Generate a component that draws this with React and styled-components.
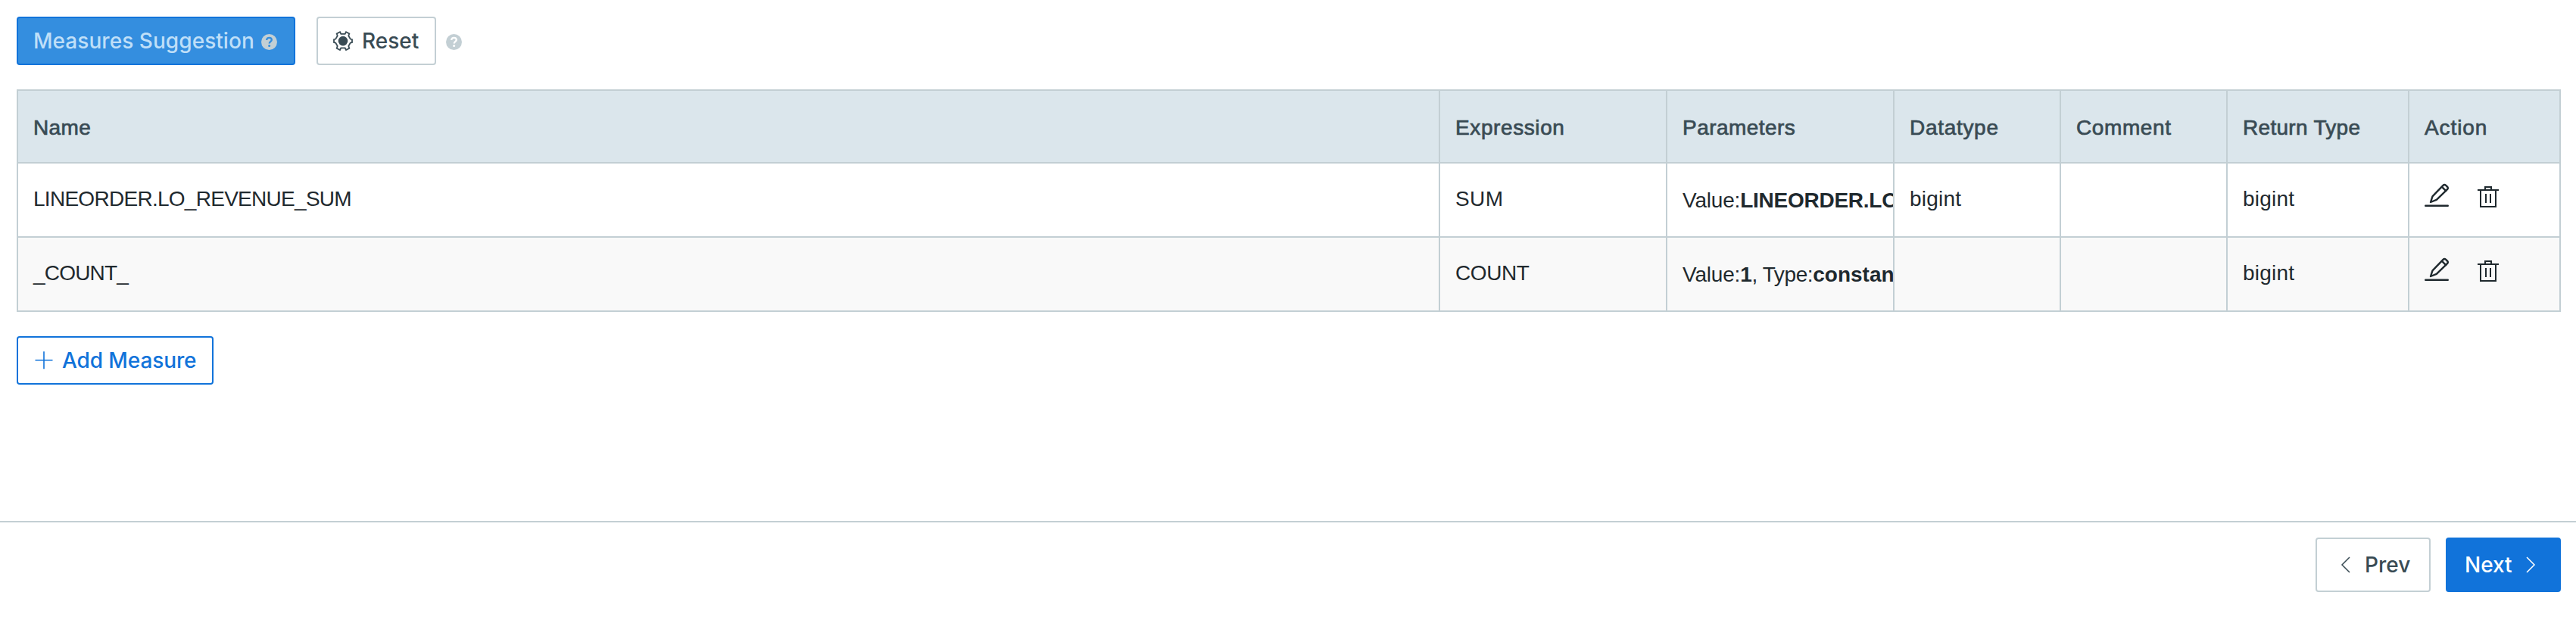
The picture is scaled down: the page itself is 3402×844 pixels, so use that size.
import React from "react";
import styled, { createGlobalStyle, css } from "styled-components";

const color = {
  line: "#c3cfd4",
  header: "#dbe6ec",
  heading: "#394b54",
  text: "#1f292e",
  primary: "#1173da",
  primaryMuted: "#348edf",
  stripe: "#f9f9f9",
};

const GlobalStyle = createGlobalStyle`
  *, *::before, *::after { box-sizing: border-box; }
  body { margin: 0; background: #fff; }
`;

const Page = styled.div`
  display: flex;
  flex-direction: column;
  height: 844px;
  overflow: hidden;
  font-family: "Liberation Sans", Arial, sans-serif;
  font-size: 28px;
  color: ${color.text};
`;

const Main = styled.main`
  display: flex;
  flex-direction: column;
  align-items: flex-start;
  height: 688px;
  padding: 22px 20px 0 22px;
`;

const Toolbar = styled.div`
  display: flex;
  align-items: center;
  margin-bottom: 32px;
`;

const variants = {
  plain: css`
    background: #fff;
    border-color: ${color.line};
    color: ${color.heading};
  `,
  outline: css`
    background: #fff;
    border-color: ${color.primary};
    color: ${color.primary};
  `,
  primary: css`
    background: ${color.primary};
    border-color: ${color.primary};
    color: #fff;
  `,
  muted: css`
    background: ${color.primaryMuted};
    border-color: ${color.primary};
    color: #bfdff8;
  `,
};

const Button = styled.button`
  display: flex;
  align-items: center;
  flex: none;
  width: ${(p) => p.$width}px;
  height: ${(p) => (p.$large ? 72 : 64)}px;
  padding: 0 0 0 ${(p) => p.$inset ?? 20}px;
  gap: ${(p) => p.$gap}px;
  border: 2px solid;
  border-radius: 4px;
  font: 500 28px/34px Inter, sans-serif;
  letter-spacing: ${(p) => p.$track ?? 0}px;
  white-space: nowrap;
  ${(p) => variants[p.$variant]}
`;

const ResetSlot = styled.div`
  display: flex;
  align-items: center;
  gap: 13px;
  margin-left: 28px;
`;

const Icon = styled.svg`
  display: block;
  flex: none;
  overflow: visible;
  margin-top: ${(p) => p.$drop ?? 0}px;
`;

const Table = styled.div`
  display: grid;
  grid-template-columns: 1880px 300px 300px 220px 220px 240px 200px;
  border-top: 2px solid ${color.line};
`;

const Cell = styled.div`
  display: flex;
  align-items: center;
  height: 98px;
  min-width: 0;
  padding: 1px 0 ${(p) => p.$lift ?? 4}px 20px;
  overflow: hidden;
  white-space: pre;
  line-height: 32px;
  letter-spacing: ${(p) => p.$track ?? 0}px;
  background: ${(p) => (p.$striped ? color.stripe : "#fff")};
  border-right: 2px solid ${color.line};
  border-bottom: 2px solid ${color.line};
  &:nth-child(7n + 1) {
    border-left: 2px solid ${color.line};
  }
`;

const HeadCell = styled(Cell)`
  height: 96px;
  padding: 3px 0 0 20px;
  background: ${color.header};
  color: ${color.heading};
  -webkit-text-stroke: 0.7px ${color.heading};
`;

const Actions = styled.div`
  display: flex;
  align-items: center;
  gap: 38px;
`;

const AddRow = styled.div`
  margin-top: 32px;
`;

const Footer = styled.footer`
  display: flex;
  justify-content: flex-end;
  gap: 20px;
  height: 156px;
  padding: 20px 20px 0;
  border-top: 2px solid ${color.line};
`;

const HelpIcon = ({ mark }) => (
  <Icon width="21" height="21" viewBox="0 0 21 21" $drop={2}>
    <circle cx="10.5" cy="10.5" r="10.5" fill="#c3cfd4" />
    <path
      d="M7.2 8.1C7.2 5.9 8.6 4.8 10.5 4.8c1.9 0 3.3 1.1 3.3 2.9 0 2.2-3.1 2.4-3.1 4.9"
      fill="none"
      stroke={mark}
      strokeWidth="2.3"
    />
    <circle cx="10.6" cy="15.6" r="1.5" fill={mark} />
  </Icon>
);

const GearIcon = () => (
  <Icon width="26" height="26" viewBox="0 0 26 26" $drop={-1}>
    <path
      d="M9 1.2 10.3 3.8H15.7L17 1.2 21.3 3.5 20.3 6.3 22.8 10.6 25 11.2V15L22.8 15.6 20.3 19.9 21.3 22.7 17 25 15.7 22.4H10.3L9 25 4.7 22.7 5.7 19.9 3.2 15.6 1 15V11.2L3.2 10.6 5.7 6.3 4.7 3.5Z"
      fill="none"
      stroke="currentColor"
      strokeWidth="1.8"
    />
    <circle cx="13" cy="13.1" r="6.3" fill="currentColor" />
  </Icon>
);

const PlusIcon = () => (
  <Icon width="24" height="24" viewBox="0 0 24 24">
    <path d="M0.5 11.7H23.5M12 0.2V23.2" fill="none" stroke="currentColor" strokeWidth="1.6" />
  </Icon>
);

const Chevron = ({ right }) => (
  <Icon width="12" height="20" viewBox="0 0 12 20" $drop={-1}>
    <path
      d={right ? "M1 0 11 10 1 20" : "M11 0 1 10 11 20"}
      fill="none"
      stroke="currentColor"
      strokeWidth="1.5"
    />
  </Icon>
);

const EditIcon = () => (
  <Icon width="32" height="32" viewBox="0 0 32 32" $drop={-4}>
    <g fill="none" stroke="currentColor" strokeWidth="2.4" strokeLinejoin="round" strokeLinecap="round">
      <path d="M8 25 10.5 17.3 24.5 2.8Q26.2 1 28.2 2.8L30 4.6Q31.6 6.4 30 8.2L15.8 21.8Z" />
      <path d="M23.2 5.2 28.2 10.1" />
      <path d="M1.2 29.8H30.8" />
    </g>
  </Icon>
);

const TrashIcon = () => (
  <Icon width="28" height="28" viewBox="0 0 28 28">
    <g fill="none" stroke="currentColor" strokeWidth="2">
      <path d="M0 5H28" />
      <path d="M10 5V1H18V5" />
      <path d="M4 5V27H24V5" />
      <path d="M11 10V22M17 10V22" />
    </g>
  </Icon>
);

const columns = [
  ["Name", 0.4],
  ["Expression", 0.6],
  ["Parameters", 0.45],
  ["Datatype", 0.7],
  ["Comment", 0.6],
  ["Return Type", 0.3],
  ["Action", 0.9],
];

const Term = styled.span`
  letter-spacing: ${(p) => p.$track}px;
`;

const Value = styled.b`
  letter-spacing: -0.25px;
`;

const rows = [
  {
    name: "LINEORDER.LO_REVENUE_SUM",
    nameTrack: -0.72,
    expression: "SUM",
    expressionTrack: 0.4,
    parameters: (
      <span>
        <Term $track={-0.2}>Value:</Term>
        <Value>LINEORDER.LO</Value>
      </span>
    ),
    datatype: "bigint",
    returnType: "bigint",
  },
  {
    name: "_COUNT_",
    nameTrack: -0.8,
    expression: "COUNT",
    expressionTrack: -0.4,
    parameters: (
      <span>
        <Term $track={-0.2}>Value:</Term>
        <Value>1</Value>
        <Term $track={-0.4}>, Type:</Term>
        <b>constan</b>
      </span>
    ),
    datatype: "",
    returnType: "bigint",
  },
];

export default function App() {
  return (
    <Page>
      <GlobalStyle />
      <Main>
        <Toolbar>
          <Button $variant="muted" $width={368} $gap={9} $track={0.05}>
            Measures Suggestion
            <HelpIcon mark={color.primaryMuted} />
          </Button>
          <ResetSlot>
            <Button $variant="plain" $width={158} $gap={12}>
              <GearIcon />
              Reset
            </Button>
            <HelpIcon mark="#fff" />
          </ResetSlot>
        </Toolbar>
        <Table>
          {columns.map(([label, track]) => (
            <HeadCell key={label} $track={track}>
              {label}
            </HeadCell>
          ))}
          {rows.map((row, i) => {
            const striped = i % 2 === 1;
            return (
              <React.Fragment key={row.name}>
                <Cell $striped={striped} $track={row.nameTrack}>{row.name}</Cell>
                <Cell $striped={striped} $track={row.expressionTrack}>{row.expression}</Cell>
                <Cell $striped={striped} $lift={0}>{row.parameters}</Cell>
                <Cell $striped={striped} $track={0.2}>{row.datatype}</Cell>
                <Cell $striped={striped} />
                <Cell $striped={striped} $track={0.2}>{row.returnType}</Cell>
                <Cell $striped={striped} $lift={9}>
                  <Actions>
                    <EditIcon />
                    <TrashIcon />
                  </Actions>
                </Cell>
              </React.Fragment>
            );
          })}
        </Table>
        <AddRow>
          <Button $variant="outline" $width={260} $inset={22} $gap={12} $track={-0.1}>
            <PlusIcon />
            Add Measure
          </Button>
        </AddRow>
      </Main>
      <Footer>
        <Button $variant="plain" $large $width={152} $inset={32} $gap={19}>
          <Chevron />
          Prev
        </Button>
        <Button $variant="primary" $large $width={152} $inset={23} $gap={18}>
          Next
          <Chevron right />
        </Button>
      </Footer>
    </Page>
  );
}
